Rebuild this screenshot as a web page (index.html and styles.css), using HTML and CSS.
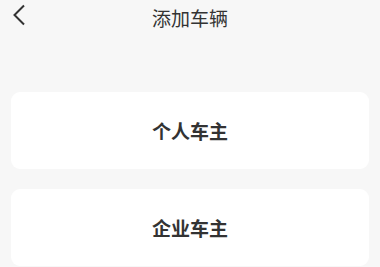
FILE: index.html
```html
<!DOCTYPE html>
<html lang="zh">
<head>
<meta charset="utf-8">
<link rel="stylesheet" href="styles.css">
</head>
<body>
<div class="page">
  <header class="nav">
    <span class="back">
      <svg width="14" height="22" viewBox="0 0 14 22"><path d="M12 1.5 L2.5 11 L12 20.5" fill="none" stroke="#333" stroke-width="2"/></svg>
    </span>
    <h1 class="title">添加车辆</h1>
  </header>
  <main class="list">
    <div class="card">个人车主</div>
    <div class="card">企业车主</div>
  </main>
</div>
</body>
</html>
```
FILE: styles.css
```css
* { box-sizing: border-box; }
html, body { margin: 0; padding: 0; }
body {
  background: #f7f7f7;
  font-family: "Noto Sans CJK SC", "Noto Sans", sans-serif;
  color: #333;
  width: 380px;
  height: 267px;
  overflow: hidden;
}
.nav {
  height: 34px;
  display: flex;
  align-items: center;
  justify-content: center;
  position: relative;
}
.back {
  position: absolute;
  left: 12px;
  top: 4px;
  display: flex;
}
.title {
  margin: 0;
  font-size: 19px;
  font-weight: 400;
  color: #333;
}
.list {
  padding: 58px 11px 0 11px;
  display: flex;
  flex-direction: column;
  gap: 20px;
}
.card {
  background: #fff;
  border-radius: 9px;
  height: 77px;
  display: flex;
  align-items: center;
  justify-content: center;
  font-size: 19px;
  font-weight: 700;
  color: #333;
}
```
